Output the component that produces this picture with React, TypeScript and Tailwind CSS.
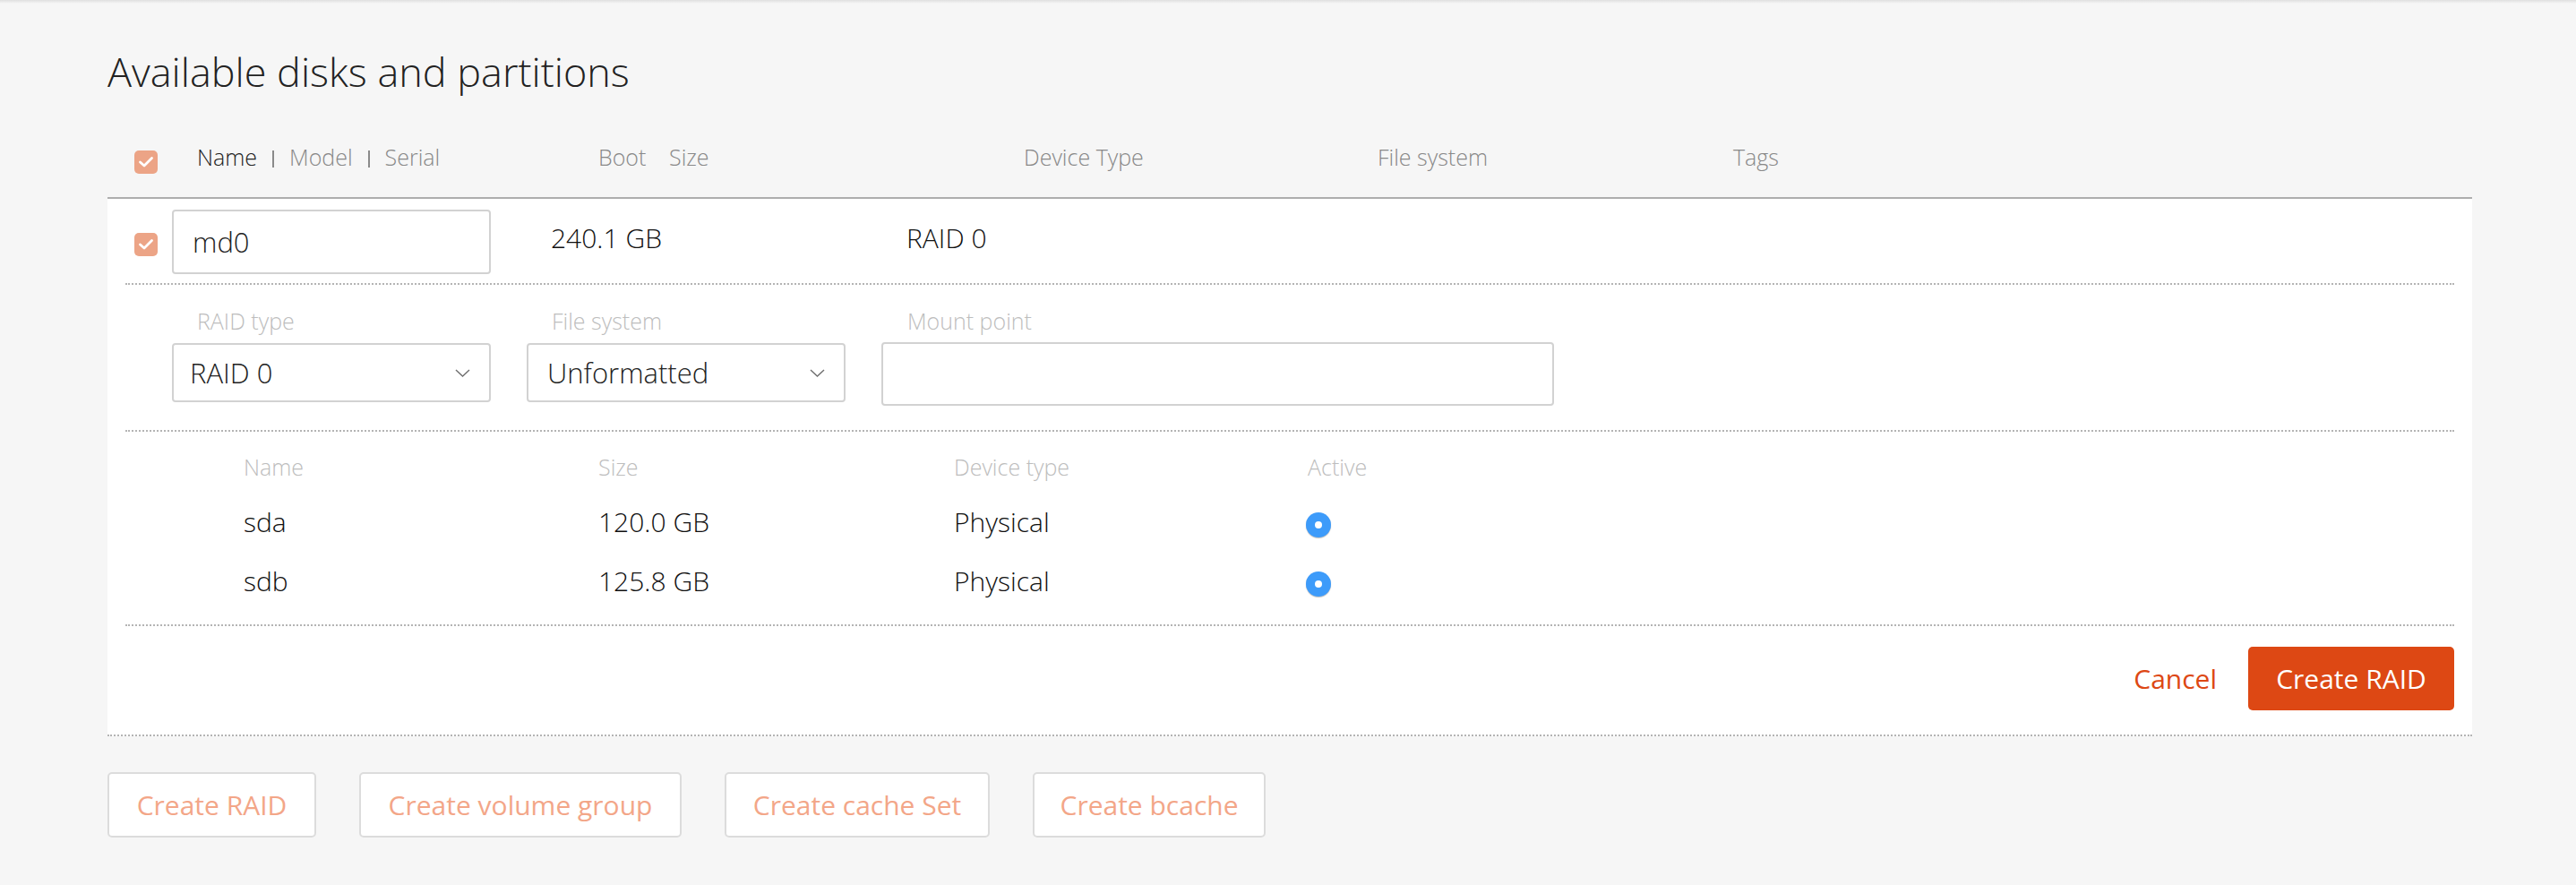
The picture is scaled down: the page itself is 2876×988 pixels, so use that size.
import React from "react";

const Check = () => (
  <div className="w-[26px] h-[26px] rounded-[5px] bg-[#eca486] flex items-center justify-center shrink-0">
    <svg width="26" height="26" viewBox="0 0 26 26">
      <polyline points="6.5,13 11,17 19.5,8.5" fill="none" stroke="#ffffff" strokeWidth="2.8" strokeLinecap="round" strokeLinejoin="round" />
    </svg>
  </div>
);

const Chevron = () => (
  <svg width="17" height="9" viewBox="0 0 17 9" className="shrink-0">
    <path d="M1 1l7.5 7 7.5-7" fill="none" stroke="#6f6f6f" strokeWidth="1.4" />
  </svg>
);

const Radio = () => (
  <div className="mt-[7px] w-[28px] h-[28px] rounded-full bg-[#3d9bfa] shadow-[0_1px_1px_rgba(0,0,0,0.25)] flex items-center justify-center">
    <div className="w-[8px] h-[8px] rounded-full bg-white" />
  </div>
);

const Dotted = () => <div className="mx-[20px] border-b-2 border-dotted border-[#b4b4b4]" />;

const Sep = () => <span className="inline-block w-[2px] h-[19px] bg-[#8a8a8a] mx-[17px] translate-y-[2px]" />;

export default function App() {
  return (
    <div className="min-h-screen w-full bg-[#f6f6f6] font-['Open_Sans',sans-serif] font-light text-[#111]">
      <div className="h-[4px] bg-gradient-to-b from-[#e0e0e0] to-[#f6f6f6]" />
      <div className="pl-[120px] pr-[116px]">
        <h1 className="mt-[50px] text-[45px] leading-[52px] font-light text-[#222]">Available disks and partitions</h1>

        {/* table header */}
        <div className="mt-[56px] flex items-start pl-[30px] pb-[26px] border-b-2 border-[#aeaeae] text-[25px] leading-[26px] text-[#888]">
          <div className="mt-[6px]"><Check /></div>
          <div className="ml-[44px] w-[448px] flex items-center">
            <span className="text-[#222]">Name</span>
            <Sep />
            <span>Model</span>
            <Sep />
            <span>Serial</span>
          </div>
          <div className="w-[79px]">Boot</div>
          <div className="w-[396px]">Size</div>
          <div className="w-[395px]">Device Type</div>
          <div className="w-[397px]">File system</div>
          <div>Tags</div>
        </div>

        {/* white panel */}
        <div className="bg-white border-b-2 border-dotted border-[#b4b4b4]">
          {/* row 1 */}
          <div className="flex items-start pl-[30px] pt-[12px] pb-[10px]">
            <div className="mt-[26px]"><Check /></div>
            <div className="ml-[16px] w-[356px] h-[72px] border-2 border-[#d2d2d2] rounded-[4px] px-[21px] flex items-center text-[31px] text-[#222]">
              md0
            </div>
            <div className="ml-[67px] w-[397px] mt-[14px] text-[30px] leading-[36px]">240.1 GB</div>
            <div className="mt-[14px] text-[30px] leading-[36px]">RAID 0</div>
          </div>
          <Dotted />

          {/* row 2 */}
          <div className="flex items-start pl-[72px] pt-[27px] pb-[27px] gap-[40px]">
            <div className="w-[356px]">
              <div className="pl-[28px] text-[25px] leading-[26px] text-[#bdbdbd]">RAID type</div>
              <div className="mt-[12px] h-[66px] border-2 border-[#d2d2d2] rounded-[4px] pl-[18px] pr-[21px] flex items-center justify-between text-[31px] text-[#222]">
                <span>RAID 0</span>
                <Chevron />
              </div>
            </div>
            <div className="w-[356px]">
              <div className="pl-[28px] text-[25px] leading-[26px] text-[#bdbdbd]">File system</div>
              <div className="mt-[12px] h-[66px] border-2 border-[#d2d2d2] rounded-[4px] pl-[21px] pr-[21px] flex items-center justify-between text-[31px] text-[#222]">
                <span>Unformatted</span>
                <Chevron />
              </div>
            </div>
            <div className="w-[751px]">
              <div className="pl-[29px] text-[25px] leading-[26px] text-[#bdbdbd]">Mount point</div>
              <div className="mt-[11px] h-[71px] border-2 border-[#d2d2d2] rounded-[4px]" />
            </div>
          </div>
          <Dotted />

          {/* row 3: members */}
          <div className="pl-[152px] pt-[26px] pb-[30px]">
            <div className="flex text-[25px] leading-[26px] text-[#bdbdbd]">
              <div className="w-[396px]">Name</div>
              <div className="w-[397px]">Size</div>
              <div className="w-[395px]">Device type</div>
              <div>Active</div>
            </div>
            <div className="mt-[31px] flex items-start text-[30px] leading-[36px]">
              <div className="w-[396px]">sda</div>
              <div className="w-[397px]">120.0 GB</div>
              <div className="w-[393px]">Physical</div>
              <Radio />
            </div>
            <div className="mt-[30px] flex items-start text-[30px] leading-[36px]">
              <div className="w-[396px]">sdb</div>
              <div className="w-[397px]">125.8 GB</div>
              <div className="w-[393px]">Physical</div>
              <Radio />
            </div>
          </div>
          <Dotted />

          {/* actions */}
          <div className="flex items-center justify-end pr-[20px] pt-[23px] pb-[27px] gap-[35px] text-[30px] font-normal">
            <button className="text-[#dd4814]">Cancel</button>
            <button className="h-[71px] w-[230px] rounded-[5px] bg-[#dd4814] text-white">Create RAID</button>
          </div>
        </div>

        {/* bottom buttons */}
        <div className="mt-[40px] flex gap-[48px] text-[30px] font-normal text-[#f3a688]">
          <button className="h-[73px] w-[233px] bg-white border-2 border-[#dcdcdc] rounded-[5px]">Create RAID</button>
          <button className="h-[73px] w-[360px] bg-white border-2 border-[#dcdcdc] rounded-[5px]">Create volume group</button>
          <button className="h-[73px] w-[296px] bg-white border-2 border-[#dcdcdc] rounded-[5px]">Create cache Set</button>
          <button className="h-[73px] w-[260px] bg-white border-2 border-[#dcdcdc] rounded-[5px]">Create bcache</button>
        </div>
      </div>
    </div>
  );
}
